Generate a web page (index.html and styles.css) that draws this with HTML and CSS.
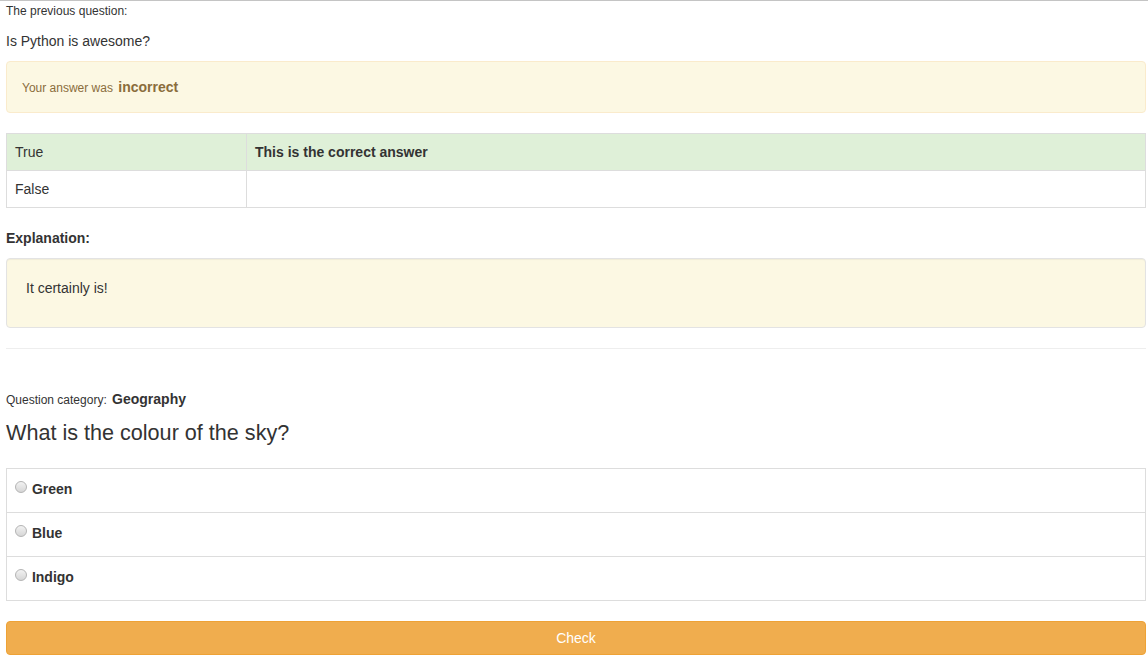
FILE: index.html
```html
<!DOCTYPE html>
<html lang="en">
<head>
  <meta charset="UTF-8">
  <title>Quiz</title>
  <link rel="stylesheet" href="styles.css">
</head>
<body>
  <div class="container">
    <p class="small-label">The previous question:</p>
    <p class="prev-question">Is Python is awesome?</p>

    <div class="alert-warning">
      Your answer was <strong>incorrect</strong>
    </div>

    <table class="answers">
      <tr class="correct">
        <td class="answer-col">True</td>
        <td><strong>This is the correct answer</strong></td>
      </tr>
      <tr>
        <td class="answer-col">False</td>
        <td></td>
      </tr>
    </table>

    <p class="explanation-title"><strong>Explanation:</strong></p>
    <div class="well">
      <p>It certainly is!</p>
    </div>

    <hr>

    <p class="category">Question category: <strong>Geography</strong></p>
    <h3 class="question">What is the colour of the sky?</h3>

    <form>
      <ul class="choices">
        <li><label><input type="radio" name="answer" value="green"> Green</label></li>
        <li><label><input type="radio" name="answer" value="blue"> Blue</label></li>
        <li><label><input type="radio" name="answer" value="indigo"> Indigo</label></li>
      </ul>
      <button type="button" class="check-button">Check</button>
    </form>
  </div>
</body>
</html>
```

FILE: styles.css
```css
/* quiz page */
body {
  font-family: "Liberation Sans", Arial, sans-serif;
  font-size: 14px;
  line-height: 20px;
  color: #333;
  background-color: #fff;
  margin: 0;
  padding: 0;
  border-top: 1px solid #c4c4c4;
}

.container {
  width: 1140px;
  margin-left: 6px;
}

p {
  margin: 0 0 10px;
}

.small-label {
  font-size: 12px;
  line-height: 17px;
  margin: 2px 0 11px;
}

.alert-warning {
  background-color: #fcf8e3;
  border: 1px solid #faebcc;
  border-radius: 4px;
  color: #8a6d3b;
  font-size: 12px;
  height: 20px;
  padding: 16px 15px 14px;
  margin-bottom: 20px;
}

.alert-warning strong {
  font-size: 14px;
  line-height: 14px;
  margin-left: 2px;
}

table.answers {
  width: 100%;
  border-collapse: collapse;
  margin-bottom: 20px;
}

table.answers td {
  border: 1px solid #ddd;
  padding: 8px;
  height: 20px;
}

table.answers td.answer-col {
  width: 223px;
}

table.answers tr.correct td {
  background-color: #dff0d8;
}

.explanation-title {
  margin-bottom: 10px;
}

.well {
  background-color: #fcf8e3;
  border: 1px solid #e3e3e3;
  border-radius: 4px;
  box-shadow: inset 0 1px 1px rgba(0, 0, 0, 0.05);
  padding: 19px;
  margin-bottom: 20px;
}

hr {
  border: 0;
  border-top: 1px solid #eee;
  margin: 20px 0;
}

.category {
  font-size: 12px;
  margin: 40px 0 0;
}

.category strong {
  font-size: 14px;
  margin-left: 2px;
}

h3.question {
  font-size: 21.6px;
  font-weight: normal;
  line-height: 24px;
  margin: 11px 0 23px;
}

ul.choices {
  list-style: none;
  padding: 0;
  margin: 0 0 20px;
}

ul.choices li {
  border: 1px solid #ddd;
  margin-bottom: -1px;
  padding: 10px 8px 13px;
}

ul.choices li:last-child {
  margin-bottom: 0;
}

ul.choices label {
  font-weight: bold;
  cursor: pointer;
}

input[type="radio"] {
  -webkit-appearance: none;
  appearance: none;
  width: 12px;
  height: 12px;
  margin: 0 1px 0 0;
  border: 1px solid #b4b4b4;
  border-radius: 50%;
  background: linear-gradient(#f2f2f2, #d6d6d6);
  vertical-align: -1px;
  position: relative;
  top: -2px;
}

button.check-button {
  display: block;
  width: 100%;
  padding: 6px 12px;
  font-family: inherit;
  font-size: 14px;
  line-height: 20px;
  color: #fff;
  background-color: #f0ad4e;
  border: 1px solid #eea236;
  border-radius: 4px;
  cursor: pointer;
}
```
